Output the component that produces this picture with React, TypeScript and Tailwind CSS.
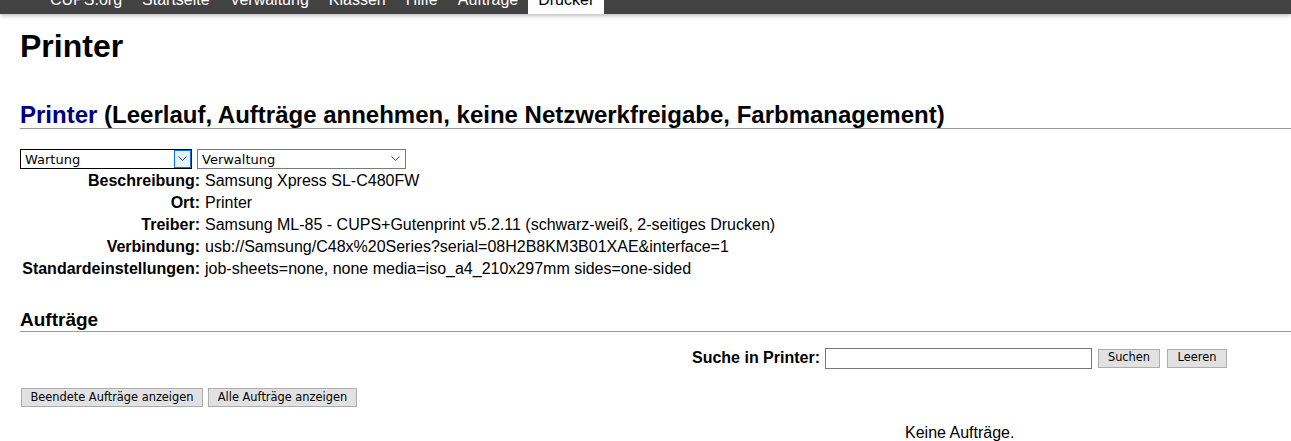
import React from 'react';

const navItems = ['CUPS.org', 'Startseite', 'Verwaltung', 'Klassen', 'Hilfe', 'Aufträge', 'Drucker'];

const details: [string, string][] = [
  ['Beschreibung:', 'Samsung Xpress SL-C480FW'],
  ['Ort:', 'Printer'],
  ['Treiber:', 'Samsung ML-85 - CUPS+Gutenprint v5.2.11 (schwarz-weiß, 2-seitiges Drucken)'],
  ['Verbindung:', 'usb://Samsung/C48x%20Series?serial=08H2B8KM3B01XAE&interface=1'],
  ['Standardeinstellungen:', 'job-sheets=none, none media=iso_a4_210x297mm sides=one-sided'],
];

const Chevron = () => (
  <svg width="9" height="6" viewBox="0 0 9 6" fill="none">
    <path d="M0.5 0.5 L4.5 4.5 L8.5 0.5" stroke="#444" strokeWidth="1" />
  </svg>
);

const GrayButton = ({ children, className = '' }: { children: React.ReactNode; className?: string }) => (
  <button
    type="button"
    className={`h-[19px] border border-[#adadad] bg-[#e1e1e1] text-[11.4px] leading-none text-black font-['DejaVu_Sans',sans-serif] ${className}`}
  >
    {children}
  </button>
);

export default function App() {
  return (
    <div className="relative h-[441px] w-[1291px] overflow-hidden bg-white font-['Liberation_Sans',Arial,sans-serif] text-black">
      {/* nav, page is scrolled a bit so only the bottom shows */}
      <div className="relative z-10 -mt-[26px] flex h-[40px] bg-[#424242] pl-[40px] shadow-[0_2px_4px_rgba(0,0,0,0.25)]">
        {navItems.map((item) => (
          <div
            key={item}
            className={`px-[10px] pt-[17px] text-[16px] leading-[18px] ${
              item === 'Drucker' ? 'bg-white text-black' : 'text-white'
            }`}
          >
            {item}
          </div>
        ))}
      </div>

      <div className="pl-[20px]">
        <h1 className="mt-[14px] text-[32px] font-bold leading-[36px]">Printer</h1>

        <h2 className="mt-[38px] border-b border-[#999] text-[24px] font-bold leading-[26px]">
          <span className="text-[#000080]">Printer</span> (Leerlauf, Aufträge annehmen, keine Netzwerkfreigabe,
          Farbmanagement)
        </h2>

        <div className="mt-[20px] flex gap-[5px] text-[13px] font-['DejaVu_Sans',sans-serif]">
          <div className="flex h-[20px] w-[172px] items-center border border-black">
            <span className="flex-1 pl-[4px] leading-none">Wartung</span>
            <span className="flex h-full w-[17px] items-center justify-center border border-[#0078d7] bg-[#e5f1fb]">
              <Chevron />
            </span>
          </div>
          <div className="flex h-[20px] w-[209px] items-center border border-[#7a7a7a] pr-[5px]">
            <span className="flex-1 pl-[4px] leading-none">Verwaltung</span>
            <Chevron />
          </div>
        </div>

        <div className="mt-[1px] grid grid-cols-[180px_1fr] gap-x-[5px] text-[16px] leading-[22px]">
          {details.map(([label, value]) => (
            <React.Fragment key={label}>
              <div className="text-right font-bold">{label}</div>
              <div>{value}</div>
            </React.Fragment>
          ))}
        </div>

        <h3 className="mt-[29px] border-b border-[#999] text-[19px] font-bold leading-[22px]">Aufträge</h3>

        <div className="mt-[14px] flex items-center justify-end pr-[64px]">
          <span className="text-[16px] font-bold">Suche in Printer:</span>
          <div className="ml-[5px] h-[21px] w-[267px] border border-[#767676]" />
          <GrayButton className="ml-[6px] w-[62px]">Suchen</GrayButton>
          <GrayButton className="ml-[7px] w-[60px]">Leeren</GrayButton>
        </div>

        <div className="mt-[18px] flex gap-[5px] pl-[1px]">
          <GrayButton className="w-[182px]">Beendete Aufträge anzeigen</GrayButton>
          <GrayButton className="w-[149px]">Alle Aufträge anzeigen</GrayButton>
        </div>

        <div className="mt-[17px] pl-[885px] text-[16px] leading-[18px]">Keine Aufträge.</div>
      </div>
    </div>
  );
}
